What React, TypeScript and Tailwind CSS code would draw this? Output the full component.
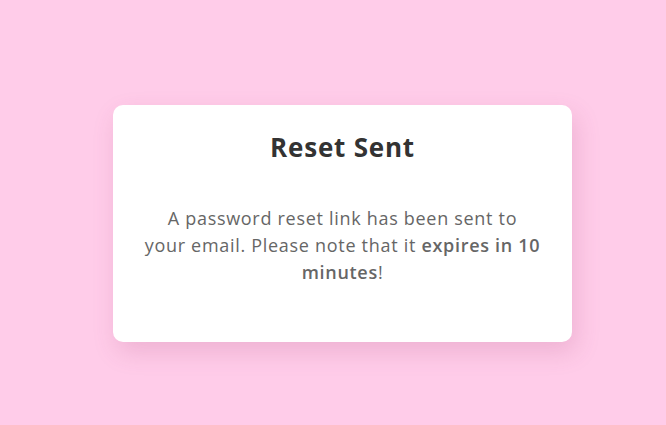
import { FC } from 'react';

const App: FC = () => {
    return (
        <div className="flex h-[425px] w-full items-center justify-center bg-[#ffcce9] pl-[19px] pt-[22px] font-['Open_Sans',sans-serif]">
            <div className="w-[459px] rounded-[10px] bg-white px-[30px] pb-[56px] pt-[24px] text-center shadow-[4px_10px_24px_rgba(160,60,110,0.18)]">
                <h2 className="text-[26px] font-bold leading-[36px] tracking-[0.8px] text-[#333333]">Reset Sent</h2>
                <p className="mt-[40px] text-[18px] leading-[27px] tracking-[0.7px] text-[#666666]">
                    A password reset link has been sent to
                    <br />
                    your email. Please note that it <span className="font-semibold">expires in 10</span>
                    <br />
                    <span className="font-semibold">minutes</span>!
                </p>
            </div>
        </div>
    );
};

export default App;
